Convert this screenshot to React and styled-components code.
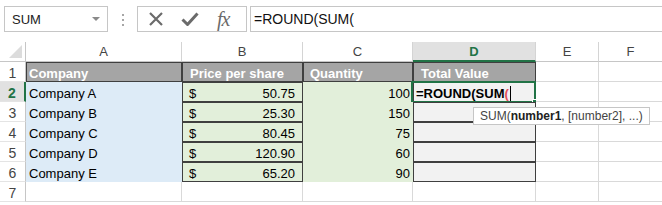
import styled, { createGlobalStyle } from 'styled-components';

const GlobalStyle = createGlobalStyle`
  body {
    margin: 0;
    background: #ffffff;
    overflow: hidden;
    font-family: 'Liberation Sans', Arial, sans-serif;
  }
`;

const COLS = [26, 156, 121, 110, 123, 63, 64];
const GRID = '#d9d9d9';
const DARK = '#3f3f3f';
const GREEN = '#217346';

const companies = [
  ['Company A', '50.75', '100'],
  ['Company B', '25.30', '150'],
  ['Company C', '80.45', '75'],
  ['Company D', '120.90', '60'],
  ['Company E', '65.20', '90'],
];

// ---------- formula bar ----------

const Toolbar = styled.div`
  display: flex;
  align-items: flex-start;
  height: 42px;
  padding: 6px 0 0 4px;
  box-sizing: border-box;
`;

const NameBox = styled.div`
  width: 104px;
  height: 26px;
  box-sizing: border-box;
  border: 1px solid #c6c6c6;
  display: flex;
  align-items: center;
  justify-content: space-between;
  padding: 0 7px 0 7px;
  font-size: 13px;
  color: #222;
`;

const Caret = styled.span`
  width: 0;
  height: 0;
  border-left: 4px solid transparent;
  border-right: 4px solid transparent;
  border-top: 4px solid #8a8a8a;
`;

const Dots = styled.div`
  display: flex;
  flex-direction: column;
  gap: 3px;
  margin: 8px 0 0 14px;

  span {
    width: 2px;
    height: 2px;
    background: #a6a6a6;
  }
`;

const ButtonGroup = styled.div`
  margin-left: 13px;
  width: 110px;
  height: 26px;
  box-sizing: border-box;
  border: 1px solid #c6c6c6;
  display: flex;
  align-items: center;
  padding-left: 10px;
  gap: 17px;
`;

const Fx = styled.span`
  font-family: 'Liberation Serif', 'Times New Roman', serif;
  font-style: italic;
  font-size: 20px;
  color: #6b6b6b;
  margin-left: 1px;
  letter-spacing: -1px;
  line-height: 20px;
`;

const FormulaInput = styled.div`
  flex: 1;
  margin-left: 3px;
  height: 26px;
  box-sizing: border-box;
  border: 1px solid #c6c6c6;
  border-right: none;
  display: flex;
  align-items: center;
  padding-left: 3px;
  font-size: 14px;
  color: #111;
`;

// ---------- sheet ----------

const Sheet = styled.div`
  display: grid;
  grid-template-columns: ${COLS.map((w) => w + 'px').join(' ')};
  grid-auto-rows: 20px;
`;

const Corner = styled.div`
  position: relative;
  border-right: 1px solid #c6c6c6;
  border-bottom: 1px solid #c6c6c6;

  &::after {
    content: '';
    position: absolute;
    right: 3px;
    bottom: 3px;
    border-left: 13px solid transparent;
    border-bottom: 13px solid #dcdcdc;
  }
`;

const ColHead = styled.div`
  display: flex;
  align-items: center;
  justify-content: center;
  font-size: 13px;
  color: ${(p) => (p.$active ? GREEN : '#444')};
  font-weight: ${(p) => (p.$active ? 700 : 400)};
  background: ${(p) => (p.$active ? '#e1e1e1' : '#fff')};
  border-right: 1px solid #d4d4d4;
  border-bottom: ${(p) => (p.$active ? `2px solid ${GREEN}` : '1px solid #c6c6c6')};
`;

const RowHead = styled.div`
  display: flex;
  align-items: center;
  justify-content: center;
  padding-top: 2px;
  box-sizing: border-box;
  font-size: 14px;
  color: ${(p) => (p.$active ? GREEN : '#444')};
  font-weight: ${(p) => (p.$active ? 700 : 400)};
  background: ${(p) => (p.$active ? '#e1e1e1' : '#fff')};
  border-right: ${(p) => (p.$active ? `2px solid ${GREEN}` : '1px solid #c6c6c6')};
  border-bottom: 1px solid #e4e4e4;
`;

const Cell = styled.div`
  position: relative;
  box-sizing: border-box;
  display: flex;
  justify-content: ${(p) => p.$justify || 'flex-start'};
  padding: 3px ${(p) => p.$padR ?? 3}px 0 ${(p) => p.$padL ?? 3}px;
  line-height: 17px;
  font-size: 13px;
  white-space: nowrap;
  color: ${(p) => p.$color || '#000'};
  font-weight: ${(p) => (p.$bold ? 700 : 400)};
  background: ${(p) => p.$bg || '#fff'};
  border-right: 1px solid ${(p) => (p.$boxed ? DARK : p.$bg || GRID)};
  border-bottom: 1px solid ${(p) => (p.$boxed ? DARK : p.$bg || GRID)};
  box-shadow: ${(p) => (p.$boxed ? `inset 1px 1px 0 ${DARK}` : 'none')};
`;

const ActiveFrame = styled.div`
  position: absolute;
  left: -2px;
  top: -1px;
  right: -1px;
  bottom: -2px;
  border: 2px solid ${GREEN};
  pointer-events: none;

  &::after {
    content: '';
    position: absolute;
    right: -5px;
    bottom: -5px;
    width: 5px;
    height: 5px;
    background: ${GREEN};
    border: 1px solid #fff;
  }
`;

const Paren = styled.span`
  color: #e5505a;
`;

const Cursor = styled.span`
  display: inline-block;
  width: 1px;
  height: 15px;
  margin: 1px 0 0 1px;
  background: #000;
`;

const Tooltip = styled.div`
  position: absolute;
  left: 60px;
  top: 25px;
  z-index: 2;
  height: 18px;
  box-sizing: border-box;
  padding: 0 6px;
  background: #fff;
  border: 1px solid #c6c6c6;
  font-size: 12px;
  font-weight: 400;
  line-height: 16px;
  color: #444;

  b {
    color: #222;
  }
`;

const XIcon = () => (
  <svg width="16" height="16" viewBox="0 0 16 16">
    <path d="M2 2 L14 14 M14 2 L2 14" stroke="#6b6b6b" strokeWidth="2.2" fill="none" />
  </svg>
);

const CheckIcon = () => (
  <svg width="18" height="16" viewBox="0 0 18 16">
    <path d="M1.5 8.5 L6.5 13.5 L16.5 2.5" stroke="#6b6b6b" strokeWidth="3" fill="none" strokeLinejoin="round" />
  </svg>
);

const Blank = ({ n }) => Array.from({ length: n }, (_, i) => <Cell key={i} />);

function App() {
  return (
    <>
      <GlobalStyle />
      <Toolbar>
        <NameBox>
          SUM
          <Caret />
        </NameBox>
        <Dots>
          <span />
          <span />
          <span />
        </Dots>
        <ButtonGroup>
          <XIcon />
          <CheckIcon />
          <Fx>fx</Fx>
        </ButtonGroup>
        <FormulaInput>=ROUND(SUM(</FormulaInput>
      </Toolbar>

      <Sheet>
        <Corner />
        {['A', 'B', 'C', 'D', 'E', 'F'].map((c) => (
          <ColHead key={c} $active={c === 'D'}>
            {c}
          </ColHead>
        ))}

        <RowHead>1</RowHead>
        <Cell $bg="#a5a5a5" $boxed $bold $color="#fff">Company</Cell>
        <Cell $bg="#a5a5a5" $boxed $bold $color="#fff" $padL={8}>Price per share</Cell>
        <Cell $bg="#a5a5a5" $boxed $bold $color="#fff" $padL={7}>Quantity</Cell>
        <Cell $bg="#a5a5a5" $boxed $bold $color="#fff" $padL={8}>Total Value</Cell>
        <Blank n={2} />

        {companies.map(([name, price, qty], i) => (
          <Row key={name} index={i + 2} name={name} price={price} qty={qty} />
        ))}

        <RowHead>7</RowHead>
        <Blank n={6} />
      </Sheet>
    </>
  );
}

function Row({ index, name, price, qty }) {
  const active = index === 2;
  return (
    <>
      <RowHead $active={active}>{index}</RowHead>
      <Cell $bg="#ddebf7">{name}</Cell>
      <Cell $bg="#e2efda" $boxed $justify="space-between" $padL={7} $padR={7}>
        <span>$</span>
        <span>{price}</span>
      </Cell>
      <Cell $bg="#e2efda" $justify="flex-end" $padR={2}>
        {qty}
      </Cell>
      {active ? (
        <Cell $bg="#f2f2f2" $boxed $bold $padL={3}>
          =ROUND(SUM<Paren>(</Paren>
          <Cursor />
          <ActiveFrame />
          <Tooltip>
            SUM(<b>number1</b>, [number2], ...)
          </Tooltip>
        </Cell>
      ) : (
        <Cell $bg="#f2f2f2" $boxed />
      )}
      <Blank n={2} />
    </>
  );
}

export default App;
